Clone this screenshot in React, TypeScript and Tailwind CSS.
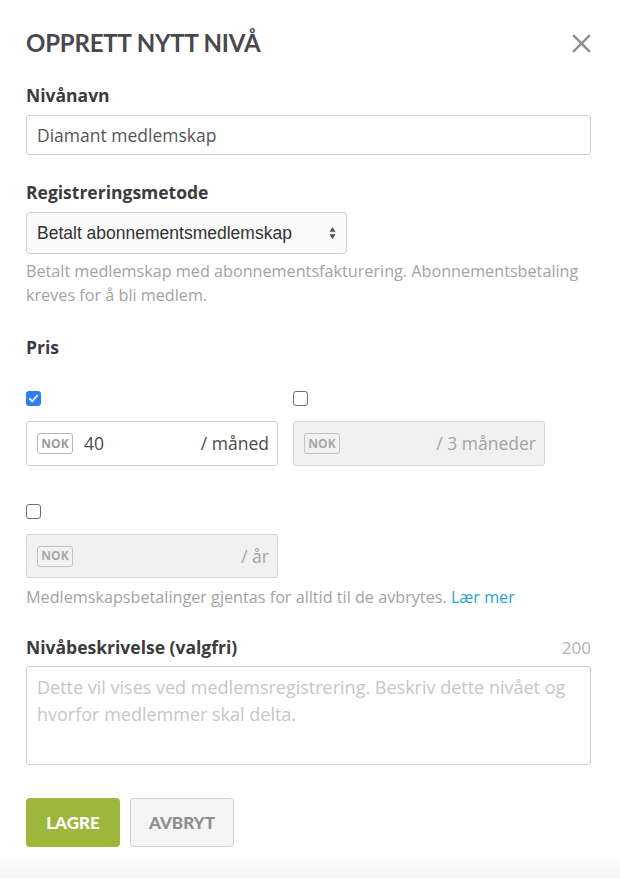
import React from "react";

const body = { fontFamily: '"Open Sans", "Noto Sans", sans-serif' };
const head = { fontFamily: 'Lato, "Noto Sans", sans-serif' };

function Nok({ muted }: { muted?: boolean }) {
  return (
    <span
      className={`inline-flex h-[21px] w-[36px] items-center justify-center rounded-[3px] border text-[12px] font-bold leading-none ${
        muted ? "border-[#c2c2c2] text-[#a8a8a8]" : "border-[#b8b8b8] text-[#9c9c9c]"
      }`}
    >
      NOK
    </span>
  );
}

function Check({ checked }: { checked?: boolean }) {
  if (checked) {
    return (
      <span className="flex h-[15px] w-[15px] items-center justify-center rounded-[3px] bg-[#2d7ff5]">
        <svg viewBox="0 0 12 12" className="h-[11px] w-[11px]">
          <path d="M2 6.4l2.6 2.6L10 3" fill="none" stroke="white" strokeWidth="2" strokeLinecap="round" strokeLinejoin="round" />
        </svg>
      </span>
    );
  }
  return <span className="block h-[15px] w-[15px] rounded-[3px] border border-[#6e6e6e] bg-white" />;
}

function PriceField({ value, unit, disabled, h = "h-[45px]" }: { value?: string; unit: string; disabled?: boolean; h?: string }) {
  return (
    <div
      className={`flex ${h} w-[252px] items-center rounded-[3px] border pl-[10px] pr-[8px] ${
        disabled ? "border-[#d6d6d6] bg-[#f1f1f1]" : "border-[#cfcfcf] bg-white"
      }`}
    >
      <Nok muted={disabled} />
      <span className="ml-[11px] flex-1 text-[17.5px] text-[#4a4a4a]">{value}</span>
      <span className={`text-[17.5px] ${disabled ? "text-[#a3a3a3]" : "text-[#4a4a4a]"}`}>{unit}</span>
    </div>
  );
}

export default function App() {
  return (
    <div className="relative h-[878px] w-[620px] overflow-hidden bg-white" style={body}>
      <div className="pl-[26px] pr-[29px] pt-[25px]">
        <div className="flex h-[36px] items-center justify-between">
          <h1 className="text-[24px] font-bold uppercase leading-[36px] tracking-[-0.2px] text-[#48484d]" style={head}>
            Opprett nytt nivå
          </h1>
          <svg viewBox="0 0 20 20" className="h-[19px] w-[19px]">
            <path d="M2 2l16 16M18 2L2 18" stroke="#8c8c8c" strokeWidth="2.4" strokeLinecap="square" />
          </svg>
        </div>

        <label className="mt-[22px] block text-[17.5px] font-bold leading-[24px] text-[#3b3b40]">Nivånavn</label>
        <div className="mt-[8px] flex h-[40px] items-center rounded-[3px] border border-[#cfcfcf] px-[10px] text-[17.5px] text-[#555]">
          Diamant medlemskap
        </div>

        <label className="mt-[25px] block text-[17.5px] font-bold leading-[24px] text-[#3b3b40]">Registreringsmetode</label>
        <div
          className="mt-[8px] flex h-[42px] w-[321px] items-center justify-between rounded-[4px] border border-[#cfcfcf] bg-[#fafafa] pl-[10px] pr-[10px] text-[17.5px] text-[#333]"
          style={{ fontFamily: '"Liberation Sans", Arial, sans-serif' }}
        >
          Betalt abonnementsmedlemskap
          <svg viewBox="0 0 8 16" className="h-[16px] w-[7px]">
            <path d="M4 1L7.5 6.5H0.5z M4 15L0.5 9.5h7z" fill="#555" />
          </svg>
        </div>
        <p className="mt-[5px] text-[16.2px] leading-[24px] text-[#a3a3a3]">
          Betalt medlemskap med abonnementsfakturering. Abonnementsbetaling kreves for å bli medlem.
        </p>

        <label className="mt-[28px] block text-[17.5px] font-bold leading-[24px] text-[#3b3b40]">Pris</label>

        <div className="mt-[32px] flex gap-[15px]">
          <div>
            <Check checked />
            <div className="mt-[15px]">
              <PriceField value="40" unit="/ måned" />
            </div>
          </div>
          <div>
            <Check />
            <div className="mt-[15px]">
              <PriceField unit="/ 3 måneder" disabled />
            </div>
          </div>
        </div>

        <div className="mt-[38px]">
          <Check />
          <div className="mt-[15px]">
            <PriceField unit="/ år" disabled h="h-[44px]" />
          </div>
        </div>
        <p className="mt-[7px] text-[16.2px] leading-[24px] text-[#a3a3a3]">
          Medlemskapsbetalinger gjentas for alltid til de avbrytes. <span className="text-[#2e9fd6]">Lær mer</span>
        </p>

        <div className="mt-[26px] flex items-end justify-between">
          <label className="text-[17.5px] font-bold leading-[24px] text-[#3b3b40]">Nivåbeskrivelse (valgfri)</label>
          <span className="text-[17px] leading-[22px] text-[#b3b3b3]">200</span>
        </div>
        <div className="mt-[7px] h-[99px] rounded-[3px] border border-[#cfcfcf] px-[10px] pt-[7px] text-[18px] leading-[27px] text-[#c6c6c6]">
          Dette vil vises ved medlemsregistrering. Beskriv dette nivået og hvorfor medlemmer skal delta.
        </div>

        <div className="mt-[33px] flex gap-[10px]" style={head}>
          <button className="h-[49px] w-[94px] rounded-[4px] bg-[#9fb63d] text-[17px] font-black uppercase text-white">
            Lagre
          </button>
          <button className="h-[49px] w-[104px] rounded-[4px] border border-[#cfcfcf] bg-[#f5f5f5] text-[17px] font-black uppercase text-[#8e8e8e]">
            Avbryt
          </button>
        </div>
      </div>
      <div className="absolute bottom-0 left-0 h-[26px] w-full bg-gradient-to-b from-white to-[#f5f5f5]" />
    </div>
  );
}
